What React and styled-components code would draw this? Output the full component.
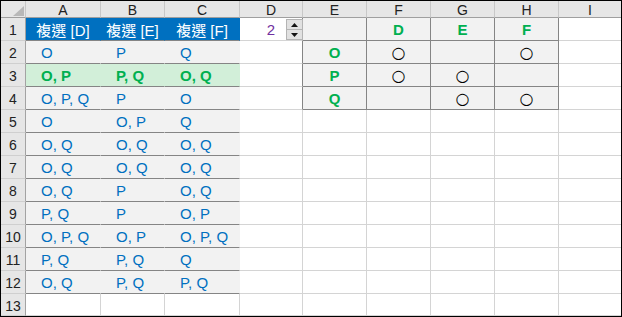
import React from "react";
import styled, { createGlobalStyle } from "styled-components";

const GlobalStyle = createGlobalStyle`
  html, body {
    margin: 0;
    padding: 0;
    background: #ffffff;
  }
  body {
    font-family: "Liberation Sans", Arial, "Noto Sans CJK TC", sans-serif;
  }
`;

const GRID = "#d4d4d4";
const DARK = "#858585";
const GRAY_FILL = "#f2f2f2";
const GREEN_FILL = "#d2efd9";
const BLUE = "#0070c0";
const GREEN = "#00b050";

const Frame = styled.div`
  width: 622px;
  height: 317px;
  box-sizing: border-box;
  border: 1px solid #000;
  overflow: hidden;
`;

const Sheet = styled.div`
  display: grid;
  grid-template-columns: 25px 75px 64px 75px 63px 64px 64px 64px 64px 62px;
  grid-template-rows: 17px repeat(12, 23px) 22px;
`;

// 欄標題 A B C ...
const ColHead = styled.div`
  box-sizing: border-box;
  display: flex;
  align-items: center;
  justify-content: center;
  background: #e6e6e6;
  border-right: ${(p) => (p.$last ? "none" : "1px solid #c8c8c8")};
  border-bottom: 1px solid #9f9f9f;
  font-size: 14px;
  color: #222;
  padding-top: 1px;
`;

const Corner = styled.div`
  box-sizing: border-box;
  position: relative;
  background: #e6e6e6;
  border-right: 1px solid #c8c8c8;
  border-bottom: 1px solid #9f9f9f;

  svg {
    position: absolute;
    right: 1px;
    bottom: 1px;
  }
`;

// 列標題 1 2 3 ...
const RowHead = styled.div`
  box-sizing: border-box;
  display: flex;
  align-items: center;
  justify-content: center;
  background: #e6e6e6;
  border-right: 1px solid #a3a3a3;
  border-bottom: 1px solid #cfcfcf;
  font-size: 14px;
  color: #222;
  padding-top: 2px;
`;

const Cell = styled.div`
  box-sizing: border-box;
  position: relative;
  display: flex;
  align-items: center;
  justify-content: ${(p) =>
    p.$align === "center" ? "center" : p.$align === "right" ? "flex-end" : "flex-start"};
  padding: 1px ${(p) => p.$padR || 0}px 0 ${(p) => p.$padL || 0}px;
  background: ${(p) => p.$fill || "#fff"};
  border-right: ${(p) => (p.$last ? "none" : `1px solid ${p.$right || GRID}`)};
  border-bottom: 1px solid ${(p) => p.$bottom || GRID};
  color: ${(p) => p.$color || "#000"};
  font-size: 15px;
  font-weight: ${(p) => (p.$bold ? 700 : 400)};
  white-space: nowrap;
`;

const Circle = styled.span`
  font-family: "DejaVu Sans", sans-serif;
  font-size: 16px;
  font-weight: 400;
  line-height: 1;
  color: #000;
`;

// 微調按鈕
const Spinner = styled.div`
  position: absolute;
  right: -1px;
  top: 1px;
  width: 17px;
  height: 21px;
  display: flex;
  flex-direction: column;
`;

const SpinButton = styled.div`
  flex: 1;
  box-sizing: border-box;
  display: flex;
  align-items: center;
  justify-content: center;
  background: #e1e1e1;
  border: 1px solid #b4b4b4;
  border-top-width: ${(p) => (p.$down ? 0 : 1)}px;
`;

const Arrow = ({ down }) => (
  <svg width="7" height="4" viewBox="0 0 7 4">
    <polygon points={down ? "0,0 7,0 3.5,4" : "0,4 7,4 3.5,0"} fill="#111" />
  </svg>
);

const cols = ["A", "B", "C", "D", "E", "F", "G", "H", "I"];

const choices = [
  ["O", "P", "Q"],
  ["O, P", "P, Q", "O, Q"],
  ["O, P, Q", "P", "O"],
  ["O", "O, P", "Q"],
  ["O, Q", "O, Q", "O, Q"],
  ["O, Q", "O, Q", "O, Q"],
  ["O, Q", "P", "O, Q"],
  ["P, Q", "P", "O, P"],
  ["O, P, Q", "O, P", "O, P, Q"],
  ["P, Q", "P, Q", "Q"],
  ["O, Q", "P, Q", "P, Q"],
];

const matrix = [
  ["", "D", "E", "F"],
  ["O", "○", "", "○"],
  ["P", "○", "○", ""],
  ["Q", "", "○", "○"],
];

const renderCell = (r, c) => {
  const key = `${r}-${c}`;
  const last = c === 8;

  // A-C 欄
  if (c <= 2) {
    if (r === 1) {
      return (
        <Cell key={key} $fill={BLUE} $right={BLUE} $bottom={DARK} $color="#fff" $align="center">
          {`複選 [${["D", "E", "F"][c]}]`}
        </Cell>
      );
    }
    if (r >= 2 && r <= 12) {
      const green = r === 3;
      const fill = green ? GREEN_FILL : GRAY_FILL;
      return (
        <Cell
          key={key}
          $fill={fill}
          $right={fill}
          $bottom={DARK}
          $padL={15}
          $color={green ? GREEN : BLUE}
          $bold={green}
        >
          {choices[r - 2][c]}
        </Cell>
      );
    }
    return <Cell key={key} />;
  }

  // D 欄
  if (c === 3) {
    const edge = r <= 4 ? DARK : GRID;
    if (r === 1) {
      return (
        <Cell key={key} $right={edge} $align="right" $padR={27} $color="#7030a0">
          2
          <Spinner>
            <SpinButton>
              <Arrow />
            </SpinButton>
            <SpinButton $down>
              <Arrow down />
            </SpinButton>
          </Spinner>
        </Cell>
      );
    }
    return <Cell key={key} $right={edge} />;
  }

  // E-H 對照表
  if (c >= 4 && c <= 7 && r <= 4) {
    const val = matrix[r - 1][c - 4];
    const isCircle = val === "○";
    return (
      <Cell
        key={key}
        $fill={GRAY_FILL}
        $right={DARK}
        $bottom={DARK}
        $align="center"
        $color={GREEN}
        $bold
      >
        {isCircle ? <Circle>{val}</Circle> : val}
      </Cell>
    );
  }

  return <Cell key={key} $last={last} />;
};

const App = () => {
  const rows = Array.from({ length: 13 }, (_, i) => i + 1);
  return (
    <>
      <GlobalStyle />
      <Frame>
        <Sheet>
          <Corner>
            <svg width="11" height="10" viewBox="0 0 11 10">
              <polygon points="11,0 11,10 0,10" fill="#b8b8b8" />
            </svg>
          </Corner>
          {cols.map((c, i) => (
            <ColHead key={c} $last={i === cols.length - 1}>
              {c}
            </ColHead>
          ))}
          {rows.map((r) => (
            <React.Fragment key={r}>
              <RowHead>{r}</RowHead>
              {cols.map((_, c) => renderCell(r, c))}
            </React.Fragment>
          ))}
        </Sheet>
      </Frame>
    </>
  );
};

export default App;
